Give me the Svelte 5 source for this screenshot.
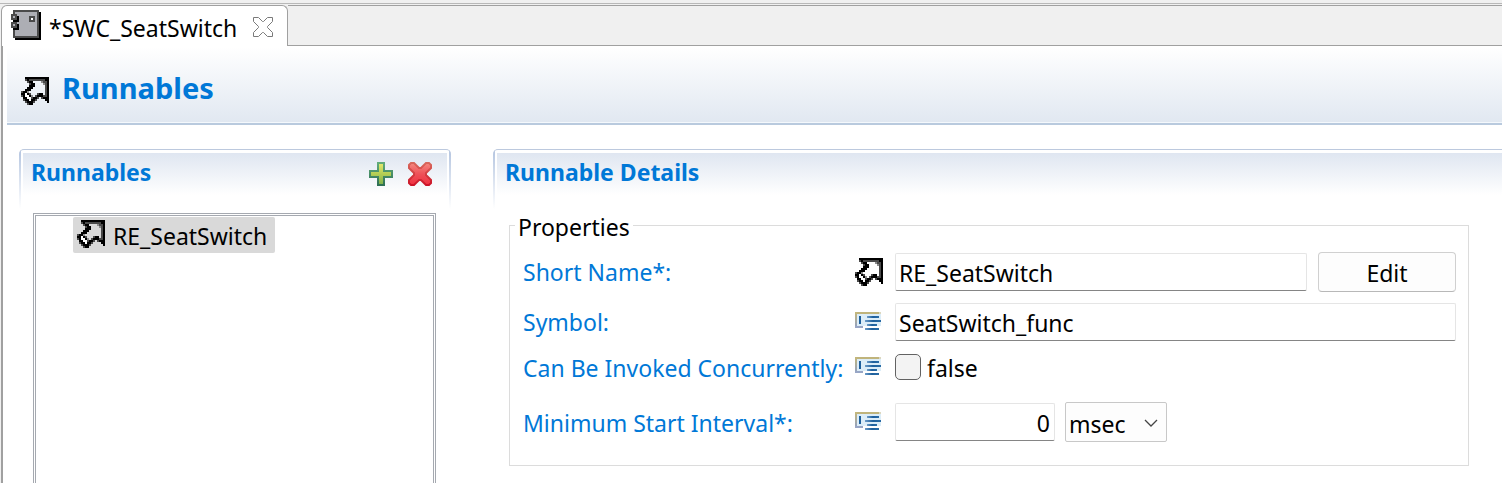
<script>
  const inks = { '#': '#000', g: '#4a4a4a', l: '#8c8c8c', w: '#fff' };
  const toCells = (rows) =>
    rows.flatMap((row, y) => [...row].map((ch, x) => ({ x, y, fill: inks[ch] }))).filter((c) => c.fill);

  const arrowCells = toCells([
    '..############',
    '..g#gggggggg##',
    '...g##....lgg#',
    '....g##....lg#',
    '....###.....g#',
    '...###......g#',
    '..###.......g#',
    'g##l........g#',
    '##w#g...g##.g#',
    'g#ww#l.g###gg#',
    '.##wwg##g.g###',
    '.g##w##g....##',
    '..g###g......#',
    '...g##........'
  ]);

  const units = ['msec', 'usec', 'sec'];
  let shortName = $state('RE_SeatSwitch');
  let symbol = $state('SeatSwitch_func');
  let concurrent = $state(false);
  let interval = $state('0');
  let unit = $state('msec');
</script>

{#snippet arrow()}
  <svg class="arrow" viewBox="0 0 14 14" shape-rendering="crispEdges" aria-hidden="true">
    {#each arrowCells as c}
      <rect x={c.x} y={c.y} width="1" height="1" fill={c.fill} />
    {/each}
  </svg>
{/snippet}

{#snippet attribute()}
  <svg class="attribute" viewBox="0 0 26 18" shape-rendering="crispEdges" aria-hidden="true">
    <defs>
      <linearGradient id="frame" x1="0" y1="0" x2="0" y2="1">
        <stop offset="0" stop-color="#c6b878" />
        <stop offset="1" stop-color="#8f9fc4" />
      </linearGradient>
      <linearGradient id="bar" x1="0" y1="0" x2="1" y2="0">
        <stop offset="0" stop-color="#6e9cc8" />
        <stop offset=".5" stop-color="#1d5f9c" />
        <stop offset="1" stop-color="#2a6ca6" />
      </linearGradient>
    </defs>
    <rect x="2" y="2" width="24" height="14" fill="#dcedf8" />
    <rect width="24" height="2" fill="#c0b47c" />
    <rect x="24" width="2" height="2" fill="#dcd8c0" />
    <rect y="0" width="2" height="16" fill="url(#frame)" />
    <rect y="14" width="8" height="2" fill="#98a6c6" />
    <rect x="4" y="4" width="2" height="8" fill="#1d5f9c" />
    <rect x="8" y="14" width="18" height="4" fill="#fff" />
    <rect x="12" y="4" width="12" height="2" fill="url(#bar)" />
    <rect x="10" y="8" width="16" height="2" fill="url(#bar)" />
    <rect x="12" y="12" width="10" height="2" fill="url(#bar)" />
    <rect x="10" y="16" width="14" height="2" fill="url(#bar)" />
  </svg>
{/snippet}

<div class="editor">
  <div class="tabs">
    <div class="tab">
      <svg class="chip" viewBox="0 0 15 15" shape-rendering="crispEdges" aria-hidden="true">
        <path d="M2 1h13v14H2z" fill="#000" />
        <path d="M1 0h13v14H1z" fill="#4a4a4a" />
        <path d="M2 1h11v12H2z" fill="#adaeb4" />
        <path d="M1 3h3v3H1zM1 7h3v3H1z" fill="#000" />
        <path d="M0 2h3v3H0zM0 6h3v3H0zM9 3h3v3H9z" fill="#4a4a4a" />
        <path d="M1 3h1v1H1zM1 7h1v1H1z" fill="#adaeb4" />
        <path d="M10 4h1v1h-1z" fill="#fff" />
      </svg>
      <span>*SWC_SeatSwitch</span>
      <button class="close" aria-label="Close">
        <svg viewBox="0 0 20 20" aria-hidden="true">
          <path d="M.5.5h5l4 4h1l4-4h5v4l-5 5v1l5 5v4h-5l-4-4h-1l-4 4h-5v-4l5-5v-1l-5-5z" fill="#fff" stroke="#7a7a7a" />
        </svg>
      </button>
    </div>
    <div class="strip"></div>
  </div>

  <main>
    <header class="title">
      {@render arrow()}
      <h1>Runnables</h1>
    </header>

    <div class="columns">
      <section class="list">
        <div class="head closed">
          <h2>Runnables</h2>
          <button aria-label="Add">
            <svg viewBox="0 0 26 26" aria-hidden="true">
              <defs>
                <linearGradient id="plus" x1="0" y1="0" x2="0" y2="1">
                  <stop offset="0" stop-color="#e6ea6e" />
                  <stop offset=".5" stop-color="#b4ce54" />
                  <stop offset="1" stop-color="#7cb04c" />
                </linearGradient>
                <linearGradient id="plusEdge" x1="0" y1="0" x2="0" y2="1">
                  <stop offset="0" stop-color="#62ac7a" />
                  <stop offset="1" stop-color="#2f7056" />
                </linearGradient>
              </defs>
              <path d="M11 2h6v8h8v6h-8v8h-6v-8H3v-6h8z" fill="url(#plus)" stroke="url(#plusEdge)" stroke-width="2" />
            </svg>
          </button>
          <button aria-label="Remove">
            <svg viewBox="0 0 26 26" aria-hidden="true">
              <defs>
                <linearGradient id="cross" x1="0" y1="0" x2="0" y2="1">
                  <stop offset="0" stop-color="#f58a80" />
                  <stop offset=".5" stop-color="#ee5058" />
                  <stop offset="1" stop-color="#f03040" />
                </linearGradient>
                <linearGradient id="crossEdge" x1="0" y1="0" x2="0" y2="1">
                  <stop offset="0" stop-color="#d8685c" />
                  <stop offset="1" stop-color="#cc1428" />
                </linearGradient>
              </defs>
              <path d="M4 2h3l5 5h2l5-5h3l2 2v3l-5 5v2l5 5v3l-2 2h-3l-5-5h-2l-5 5H4l-2-2v-3l5-5v-2L2 7V4z" fill="url(#cross)" stroke="url(#crossEdge)" stroke-width="2" />
            </svg>
          </button>
        </div>
        <div class="tree" role="tree">
          <div class="node" role="treeitem" aria-selected="true" tabindex="0">
            {@render arrow()}
            <span>RE_SeatSwitch</span>
          </div>
        </div>
      </section>

      <section class="details">
        <div class="head"><h2>Runnable Details</h2></div>
        <fieldset>
          <legend>Properties</legend>
          <div class="row">
            <label for="short-name">Short Name*:</label>
            {@render arrow()}
            <input id="short-name" class="field wide" type="text" bind:value={shortName} />
            <button class="edit">Edit</button>
          </div>
          <div class="row">
            <label for="symbol">Symbol:</label>
            {@render attribute()}
            <input id="symbol" class="field wide" type="text" bind:value={symbol} />
          </div>
          <div class="row short">
            <label for="concurrent">Can Be Invoked Concurrently:</label>
            {@render attribute()}
            <input id="concurrent" type="checkbox" bind:checked={concurrent} />
            <span class="state">{concurrent}</span>
          </div>
          <div class="row spaced">
            <label for="interval">Minimum Start Interval*:</label>
            {@render attribute()}
            <input id="interval" class="field number" type="text" inputmode="numeric" bind:value={interval} />
            <div class="select">
              <select aria-label="Interval unit" bind:value={unit}>
                {#each units as u}<option>{u}</option>{/each}
              </select>
              <svg viewBox="0 0 14 8" aria-hidden="true"><path d="M1 1l6 6 6-6" fill="none" stroke="#444" stroke-width="1.3" /></svg>
            </div>
          </div>
        </fieldset>
      </section>
    </div>
  </main>
</div>

<style>
  :global(body) {
    margin: 0;
  }

  .editor {
    display: flex;
    flex-direction: column;
    min-height: 100vh;
    box-sizing: border-box;
    padding-top: 3px;
    background: #f0f0f0;
    font: 23px/32px 'Noto Sans', 'Open Sans', sans-serif;
    color: #000;
  }

  button,
  input,
  select {
    font: inherit;
    color: inherit;
    margin: 0;
    box-sizing: border-box;
  }

  svg {
    display: block;
    flex: none;
  }

  .tabs {
    display: flex;
    height: 42px;
    flex: none;
    border-top: 1px solid #b8b8b8;
  }

  .tab {
    display: flex;
    align-items: center;
    box-sizing: border-box;
    margin: 1px 0 0 1px;
    padding: 2px 14px 0 9px;
    border: 1px solid #a0a0a0;
    border-bottom: 0;
    border-radius: 6px 6px 0 0;
    background: #fff;
  }

  .tab span {
    margin: 2px 16px 0 8px;
  }

  .strip {
    flex: 1;
    margin-top: 1px;
    border: solid #a0a0a0;
    border-width: 1px 0;
  }

  .chip {
    width: 30px;
    height: 30px;
    margin-bottom: 4px;
  }

  .close,
  .head button {
    padding: 0;
    border: 0;
    background: none;
  }

  .close svg {
    width: 20px;
    height: 20px;
    margin-bottom: 1px;
  }

  main {
    display: flex;
    flex: 1;
    flex-direction: column;
    margin-left: 1px;
    padding: 1px 0 0 4px;
    border-left: 2px solid #a0a0a0;
    background: #fff;
  }

  .title {
    display: flex;
    align-items: center;
    gap: 13px;
    height: 75px;
    flex: none;
    padding: 0 14px;
    border-bottom: 1px solid #f4f8fc;
    background: linear-gradient(#fff, #e1e8f1);
    box-shadow: 0 2px #b9cade;
  }

  .title .arrow {
    margin-top: 13px;
  }

  h1,
  h2 {
    margin: 0;
    color: #0078d7;
    font-weight: 700;
  }

  h1 {
    margin-top: 6px;
    font-size: 29px;
    line-height: 40px;
  }

  h2 {
    flex: 1;
    font-size: 23px;
    line-height: 32px;
  }

  .arrow {
    width: 28px;
    height: 28px;
  }

  .attribute {
    width: 26px;
    height: 18px;
    margin: 0 2px 2px 0;
  }

  .columns {
    display: grid;
    flex: 1;
    grid-template-columns: 432px minmax(0, 1fr);
    column-gap: 42px;
    margin-top: 26px;
    padding-left: 12px;
  }

  .list {
    display: flex;
    flex-direction: column;
  }

  .head {
    display: flex;
    align-items: flex-start;
    gap: 14px;
    box-sizing: border-box;
    height: 60px;
    flex: none;
    padding: 6px 18px 0 12px;
    border-top: 1px solid #bcc9de;
    border-top-left-radius: 5px;
    background:
      linear-gradient(#b4c5e0, #fff) 0 0 / 2px 100% no-repeat,
      linear-gradient(#dfe6f1, #fff) 4px 3px / 100% 42px no-repeat;
  }

  .head.closed {
    border-top-right-radius: 5px;
    background:
      linear-gradient(#b4c5e0, #fff) 0 0 / 2px 100% no-repeat,
      linear-gradient(#b4c5e0, #fff) 100% 0 / 2px 100% no-repeat,
      linear-gradient(#fff, #fff) 100% 0 / 4px 100% no-repeat,
      linear-gradient(#dfe6f1, #fff) 4px 3px / 100% 42px no-repeat;
  }

  .head button {
    margin-top: 5px;
  }

  .head button svg {
    width: 26px;
    height: 26px;
  }

  .tree {
    flex: 1;
    margin: 4px 15px 0 14px;
    border: 3px double #a5a9b0;
    border-bottom: 0;
  }

  .node {
    display: flex;
    align-items: center;
    gap: 8px;
    width: max-content;
    height: 36px;
    margin: 1px 0 0 37px;
    padding: 0 8px 0 4px;
    border-radius: 2px;
    background: #d9d9d9;
  }

  .node .arrow {
    margin-bottom: 2px;
  }

  .node span {
    margin-top: 2px;
  }

  fieldset {
    min-width: 0;
    margin: 1px 33px 0 16px;
    padding: 11px 12px 23px 13px;
    border: 1px solid #dcdcdc;
  }

  legend {
    margin-left: -8px;
    padding: 3px 3px 0;
    line-height: 28px;
  }

  .row {
    display: flex;
    align-items: center;
    height: 40px;
    margin-bottom: 10px;
  }

  .row.short {
    height: 30px;
  }

  .row.spaced {
    margin: 20px 0 0;
  }

  .row label {
    flex: none;
    width: 332px;
    color: #0078d7;
  }

  .short label,
  .spaced label,
  .state {
    padding-top: 2px;
  }

  .field {
    height: 38px;
    margin-left: 12px;
    padding: 2px 4px 0 3px;
    border: 1px solid #e5e5e5;
    border-bottom-color: #858585;
    border-radius: 2px;
    background: #fff;
  }

  .wide {
    flex: 1;
    min-width: 0;
  }

  .number {
    width: 160px;
    text-align: right;
  }

  .edit {
    width: 138px;
    height: 40px;
    margin-left: 11px;
    padding: 2px 0 0;
    border: 1px solid #d0d0d0;
    border-bottom-color: #b8b8b8;
    border-radius: 4px;
    background: #fdfdfd;
  }

  input[type='checkbox'] {
    appearance: none;
    width: 26px;
    height: 26px;
    margin-left: 12px;
    border: 1px solid #626262;
    border-radius: 5px;
    background: #f3f3f3;
  }

  input[type='checkbox']:checked {
    background: #0078d7;
  }

  .state {
    margin-left: 6px;
  }

  .select {
    position: relative;
    margin-left: 10px;
  }

  select {
    appearance: none;
    display: block;
    width: 102px;
    height: 40px;
    padding: 3px 4px 0 3px;
    border: 1px solid #c8c8c8;
    border-radius: 2px;
    background: #fdfdfd;
  }

  .select svg {
    position: absolute;
    top: 17px;
    right: 9px;
    width: 14px;
    height: 8px;
    pointer-events: none;
  }
</style>
